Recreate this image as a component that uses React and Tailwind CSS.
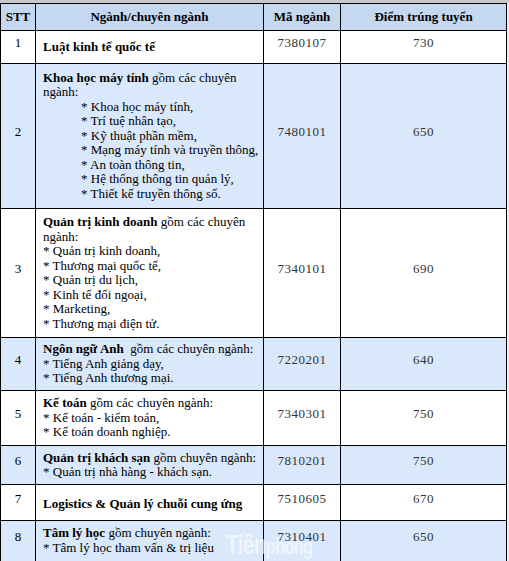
import React from "react";

const rows = [
  {
    stt: "1",
    h: "h-[33px]",
    code: "7380107",
    score: "730",
    white: true,
    body: <b>Luật kinh tế quốc tế</b>,
  },
  {
    stt: "2",
    h: "h-[145px]",
    code: "7480101",
    score: "650",
    body: (
      <>
        <div>
          <b>Khoa học máy tính</b> gồm các chuyên ngành:
        </div>
        <ul className="pl-[38px]">
          {[
            "Khoa học máy tính,",
            "Trí tuệ nhân tạo,",
            "Kỹ thuật phần mềm,",
            "Mạng máy tính và truyền thông,",
            "An toàn thông tin,",
            "Hệ thống thông tin quản lý,",
            "Thiết kế truyền thông số.",
          ].map((t, i) => (
            <li key={i}>* {t}</li>
          ))}
        </ul>
      </>
    ),
  },
  {
    stt: "3",
    h: "h-[129px]",
    code: "7340101",
    score: "690",
    white: true,
    body: (
      <>
        <div>
          <b>Quản trị kinh doanh</b> gồm các chuyên ngành:
        </div>
        {[
          "Quản trị kinh doanh,",
          "Thương mại quốc tế,",
          "Quản trị du lịch,",
          "Kinh tế đối ngoại,",
          "Marketing,",
          "Thương mại điện tử.",
        ].map((t, i) => (
          <div key={i}>* {t}</div>
        ))}
      </>
    ),
  },
  {
    stt: "4",
    h: "h-[53px]",
    code: "7220201",
    score: "640",
    body: (
      <>
        <div>
          <b>Ngôn ngữ Anh</b>&nbsp; gồm các chuyên ngành:
        </div>
        <div>* Tiếng Anh giảng dạy,</div>
        <div>* Tiếng Anh thương mại.</div>
      </>
    ),
  },
  {
    stt: "5",
    h: "h-[55px]",
    code: "7340301",
    score: "750",
    white: true,
    body: (
      <>
        <div>
          <b>Kế toán</b> gồm các chuyên ngành:
        </div>
        <div>* Kế toán - kiểm toán,</div>
        <div>* Kế toán doanh nghiệp.</div>
      </>
    ),
  },
  {
    stt: "6",
    h: "h-[39px]",
    code: "7810201",
    score: "750",
    body: (
      <>
        <div>
          <b>Quản trị khách sạn</b> gồm chuyên ngành:
        </div>
        <div>* Quản trị nhà hàng - khách sạn.</div>
      </>
    ),
  },
  {
    stt: "7",
    h: "h-[36px]",
    code: "7510605",
    score: "670",
    white: true,
    body: <b className="block pt-[4px]">Logistics &amp; Quản lý chuỗi cung ứng</b>,
  },
  {
    stt: "8",
    h: "h-[50px]",
    code: "7310401",
    score: "650",
    top: true,
    body: (
      <>
        <div>
          <b>Tâm lý học</b> gồm chuyên ngành:
        </div>
        <div>* Tâm lý học tham vấn &amp; trị liệu</div>
      </>
    ),
  },
];

export default function App() {
  return (
    <div className="relative w-[509px] h-[561px] overflow-hidden bg-[#efefef] pt-[3px] font-['Liberation_Serif',serif] text-[13px] leading-[14.5px] text-black">
      <div className="absolute top-0 left-0 w-full h-[3px] bg-[#c9c9c9]" />
      <table className="w-[506px] border-collapse table-fixed">
        <colgroup>
          <col className="w-[35px]" />
          <col className="w-[228px]" />
          <col className="w-[77px]" />
          <col className="w-[166px]" />
        </colgroup>
        <thead>
          <tr className="bg-[#c4d8ef] h-[27px] font-bold text-center">
            <th className="border border-black">STT</th>
            <th className="border border-black">Ngành/chuyên ngành</th>
            <th className="border border-black">Mã ngành</th>
            <th className="border border-black">Điểm trúng tuyển</th>
          </tr>
        </thead>
        <tbody>
          {rows.map((r) => (
            <tr key={r.stt} className={`${r.h} ${r.white ? "bg-white" : "bg-[#d9e8fb]"}`}>
              <td className={`border border-black text-center ${r.top ? "align-top pt-[9px]" : "align-middle pb-[7px]"}`}>
                {r.stt}
              </td>
              <td className={`border border-black pl-[7px] pr-[2px] ${r.top ? "align-top pt-[5px]" : "align-middle"}`}>
                {r.body}
              </td>
              <td className={`border border-black text-center text-[#333] tracking-[0.5px] ${r.top ? "align-top pt-[9px]" : "align-middle pb-[7px]"}`}>
                {r.code}
              </td>
              <td className={`border border-black text-center text-[#333] tracking-[0.5px] ${r.top ? "align-top pt-[9px]" : "align-middle pb-[7px]"}`}>
                {r.score}
              </td>
            </tr>
          ))}
        </tbody>
      </table>
      <div className="absolute left-[226px] top-[530px] origin-left scale-x-75 font-['Liberation_Sans',sans-serif] font-bold text-[28px] leading-[30px] tracking-[-1px] text-white/60 select-none">
        Tiền<span className="text-[22px]">phong</span>
      </div>
    </div>
  );
}
